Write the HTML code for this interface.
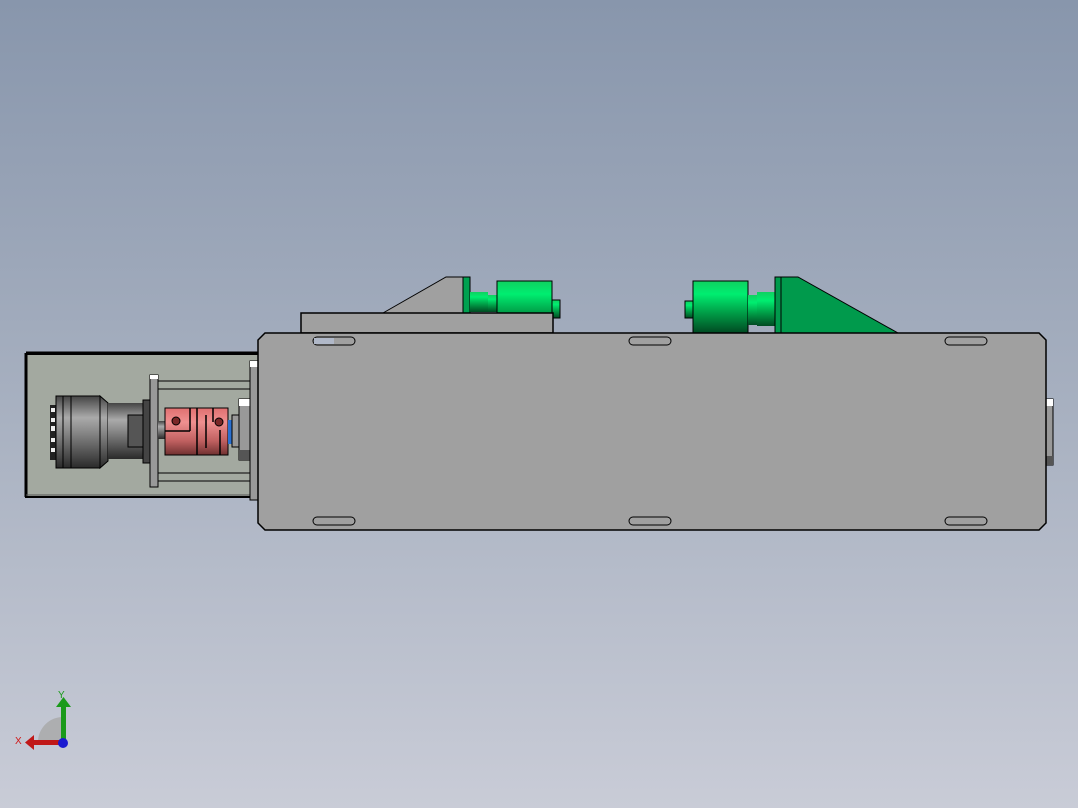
<!DOCTYPE html>
<html><head><style>html,body{margin:0;padding:0;width:1078px;height:808px;overflow:hidden}</style></head>
<body>
<svg width="1078" height="808" viewBox="0 0 1078 808" xmlns="http://www.w3.org/2000/svg">
<defs>
<linearGradient id="bg" x1="0" y1="0" x2="0" y2="1">
<stop offset="0" stop-color="#8896ac"/><stop offset="0.5" stop-color="#a7b0c0"/><stop offset="1" stop-color="#c9ccd7"/></linearGradient>
<linearGradient id="gr" x1="0" y1="0" x2="0" y2="1">
<stop offset="0" stop-color="#10d060"/><stop offset="0.25" stop-color="#00ee70"/><stop offset="0.6" stop-color="#00a048"/><stop offset="1" stop-color="#004a22"/></linearGradient>
<linearGradient id="mt" x1="0" y1="0" x2="0" y2="1">
<stop offset="0" stop-color="#444"/><stop offset="0.3" stop-color="#aaa"/><stop offset="0.5" stop-color="#888"/><stop offset="1" stop-color="#2a2a2a"/></linearGradient>
<linearGradient id="rd" x1="0" y1="0" x2="0" y2="1">
<stop offset="0" stop-color="#e07070"/><stop offset="0.3" stop-color="#f09090"/><stop offset="0.7" stop-color="#c06060"/><stop offset="1" stop-color="#703030"/></linearGradient>
</defs>
<rect width="1078" height="808" fill="url(#bg)"/>

<!-- left green parts -->
<polygon points="383,313 446,277 467,277 467,313" fill="#a0a0a0" stroke="#000"/>
<rect x="463" y="277" width="7" height="56" fill="#00a050" stroke="#000"/>
<rect x="470" y="292" width="18" height="20" fill="url(#gr)"/>
<rect x="488" y="295" width="9" height="17" fill="url(#gr)"/>
<rect x="497" y="281" width="55" height="52" fill="url(#gr)" stroke="#000"/>
<rect x="552" y="300" width="8" height="18" fill="url(#gr)" stroke="#000"/>
<rect x="301" y="313" width="252" height="20" fill="#a0a0a0" stroke="#000" stroke-width="1.5"/>
<!-- right green parts -->
<rect x="685" y="301" width="8" height="17" fill="url(#gr)" stroke="#000"/>
<rect x="693" y="281" width="55" height="52" fill="url(#gr)" stroke="#000"/>
<rect x="748" y="295" width="9" height="30" fill="url(#gr)"/>
<rect x="757" y="292" width="18" height="34" fill="url(#gr)"/>
<polygon points="775,277 798,277 898,333 775,333" fill="#009a4c" stroke="#000"/>
<line x1="781" y1="277" x2="781" y2="333" stroke="#000"/>

<!-- left housing -->
<rect x="26" y="354" width="234" height="143" fill="#a3a9a0" stroke="#000" stroke-width="2"/>
<line x1="26" y1="353" x2="260" y2="353" stroke="#000" stroke-width="3"/>
<line x1="26" y1="353" x2="26" y2="497" stroke="#000" stroke-width="3"/>
<line x1="26" y1="495" x2="255" y2="495" stroke="#555"/>
<!-- motor -->
<rect x="50" y="405" width="7" height="55" fill="#222"/>
<g fill="#eee"><rect x="51" y="408" width="4" height="4"/><rect x="51" y="418" width="4" height="4"/><rect x="51" y="426" width="4" height="5"/><rect x="51" y="438" width="4" height="4"/><rect x="51" y="448" width="4" height="4"/></g>
<rect x="56" y="396" width="44" height="72" fill="url(#mt)" stroke="#000"/>
<line x1="63" y1="396" x2="63" y2="468" stroke="#000"/><line x1="71" y1="396" x2="71" y2="468" stroke="#000"/>
<polygon points="100,396 100,468 108,461 108,403" fill="url(#mt)" stroke="#000"/>
<rect x="108" y="403" width="37" height="56" fill="url(#mt)"/>
<rect x="128" y="415" width="15" height="32" fill="#555" stroke="#000"/>
<rect x="143" y="400" width="7" height="63" fill="#444" stroke="#000"/>
<rect x="150" y="375" width="8" height="112" fill="#999" stroke="#000"/>
<rect x="150" y="375" width="8" height="4" fill="#fff"/>
<rect x="158" y="381" width="92" height="8" fill="#a3a9a0" stroke="#000"/>
<rect x="158" y="473" width="92" height="8" fill="#a3a9a0" stroke="#000"/>
<rect x="158" y="421" width="8" height="18" fill="url(#mt)"/>
<rect x="165" y="408" width="63" height="47" fill="url(#rd)" stroke="#000"/>
<path d="M190 408v23M190 431h-25M197 408v47M206 415v33M213 408v14M220 430v25" stroke="#000" stroke-width="1.5" fill="none"/>
<circle cx="176" cy="421" r="4" fill="#7a2828" stroke="#000"/><circle cx="219" cy="422" r="4" fill="#7a2828" stroke="#000"/>
<rect x="228" y="420" width="6" height="24" fill="#2a70d0"/>
<rect x="232" y="415" width="8" height="32" fill="#999" stroke="#000"/>
<rect x="239" y="399" width="11" height="61" fill="#999" stroke="#000"/>
<rect x="239" y="399" width="11" height="7" fill="#fff"/>
<rect x="239" y="450" width="11" height="10" fill="#555"/>
<rect x="250" y="361" width="8" height="139" fill="#999" stroke="#000"/>
<rect x="250" y="361" width="8" height="6" fill="#fff"/>

<!-- right end block -->
<rect x="1043" y="399" width="10" height="66" fill="#999" stroke="#000"/>
<rect x="1043" y="399" width="10" height="7" fill="#fff"/>
<rect x="1043" y="456" width="10" height="9" fill="#555"/>

<!-- main plate -->
<polygon points="265,333 1039,333 1046,340 1046,523 1039,530 265,530 258,523 258,340" fill="#a0a0a0" stroke="#000" stroke-width="1.5"/>
<g fill="#a0a0a0" stroke="#000">
<rect x="313" y="337" width="42" height="8" rx="4"/><rect x="629" y="337" width="42" height="8" rx="4"/><rect x="945" y="337" width="42" height="8" rx="4"/>
<rect x="313" y="517" width="42" height="8" rx="4"/><rect x="629" y="517" width="42" height="8" rx="4"/><rect x="945" y="517" width="42" height="8" rx="4"/>
</g>
<rect x="314" y="338" width="20" height="6" fill="#b0b8c8"/>

<!-- triad -->
<path d="M38 742 A25 25 0 0 1 63 717 L63 742Z" fill="#a8a8a8" opacity="0.8"/>
<rect x="61" y="705" width="5" height="38" fill="#1a9a1a"/>
<polygon points="56,707 63.5,697 71,707" fill="#1a9a1a"/>
<rect x="32" y="740" width="32" height="5" fill="#c01818"/>
<polygon points="34,735 25,742.5 34,750" fill="#c01818"/>
<circle cx="63" cy="743" r="5" fill="#1a1ad0"/>
<text x="58" y="698" font-family="Liberation Sans, sans-serif" font-size="10" fill="#1a9a1a">Y</text>
<text x="15" y="744" font-family="Liberation Sans, sans-serif" font-size="10" fill="#d01818">X</text>
</svg>
</body></html>
